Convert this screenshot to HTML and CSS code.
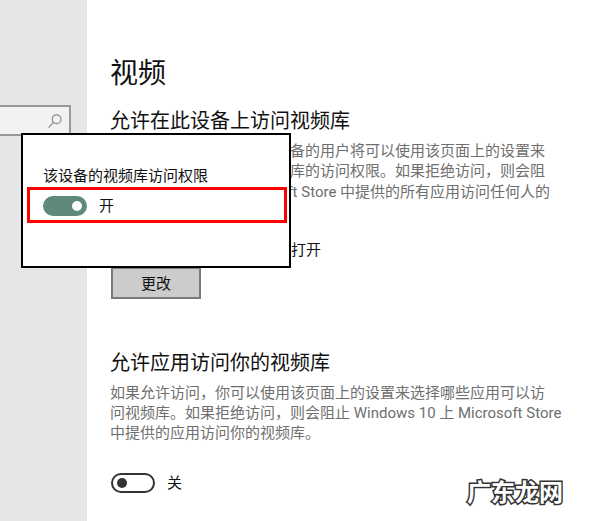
FILE: index.html
```html
<!DOCTYPE html>
<html lang="zh-CN">
<head>
    <meta charset="UTF-8">
    <title>视频</title>
    <link rel="stylesheet" href="styles.css">
</head>
<body>
    <div class="page">
        <div class="sidebar">
            <div class="search">
                <svg class="search-icon" width="16" height="16" viewBox="0 0 16 16" fill="none" stroke="#8a8a8a" stroke-width="1.2">
                    <circle cx="9.6" cy="6.2" r="4.4"/>
                    <path d="M6.4 9.4L1.6 14.6"/>
                </svg>
            </div>
        </div>

        <div class="main">
            <h1 class="title">视频</h1>

            <h2 class="heading">允许在此设备上访问视频库</h2>
            <p class="desc">如果允许访问，则使用此设备的用户将可以使用该页面上的设置来<br>选择是否允许应用访问视频库的访问权限。如果拒绝访问，则会阻<br>止 Windows 10 上 Microsoft Store 中提供的所有应用访问任何人的<br>视频库。</p>
            <p class="state-line">此设备的视频库访问权限已打开</p>
            <button class="change">更改</button>

            <h2 class="heading heading-second">允许应用访问你的视频库</h2>
            <p class="desc">如果允许访问，你可以使用该页面上的设置来选择哪些应用可以访<br>问视频库。如果拒绝访问，则会阻止 Windows 10 上 Microsoft Store<br>中提供的应用访问你的视频库。</p>
            <div class="toggle-row toggle-row-off">
                <span class="toggle toggle-off"><span class="knob"></span></span>
                <span class="toggle-text">关</span>
            </div>
        </div>

        <!-- 弹出框 -->
        <div class="popup">
            <div class="popup-label">该设备的视频库访问权限</div>
            <div class="highlight">
                <div class="toggle-row">
                    <span class="toggle toggle-on"><span class="knob"></span></span>
                    <span class="toggle-text">开</span>
                </div>
            </div>
        </div>

        <div class="watermark">广东龙网</div>
    </div>
</body>
</html>
```

FILE: styles.css
```css
body, html {
    margin: 0;
    padding: 0;
    height: 100%;
}

body {
    background: #fff;
    font-family: Roboto, "Noto Sans CJK SC", sans-serif;
    color: #111;
    overflow: hidden;
}

.page {
    position: relative;
    display: flex;
    width: 600px;
    height: 521px;
    overflow: hidden;
}

/* 左侧栏 */
.sidebar {
    width: 87px;
    flex-shrink: 0;
    padding-top: 105px;
    background: #e6e6e6;
    box-sizing: border-box;
}

.search {
    display: flex;
    align-items: center;
    justify-content: flex-end;
    width: 71px;
    height: 31px;
    padding-right: 6px;
    box-sizing: border-box;
    background: #f2f2f2;
    border: 2px solid #999;
    border-left: none;
}

/* 主区域 */
.main {
    flex: 1;
    padding-left: 24px;
}

.title {
    margin: 53px 0 0 -1px;
    font-size: 28px;
    line-height: 42px;
    font-weight: 400;
}

.heading {
    margin: 11px 0 0 -1px;
    font-size: 20px;
    line-height: 30px;
    font-weight: 400;
}

.heading-second {
    margin-top: 49px;
}

.desc {
    margin: 5px 0 0 -1px;
    font-size: 15px;
    line-height: 20.4px;
    color: #6f6f6f;
    white-space: nowrap;
}

.state-line {
    margin: 16px 0 0;
    font-size: 15px;
    line-height: 22px;
}

.change {
    display: block;
    width: 90px;
    height: 32px;
    margin-top: 6px;
    padding: 0;
    font: inherit;
    font-size: 15px;
    color: #111;
    background: #ccc;
    border: 2px solid #7a7a7a;
}

/* 开关 */
.toggle-row {
    display: flex;
    align-items: center;
    gap: 12px;
}

.toggle-row-off {
    margin-top: 29px;
}

.toggle {
    display: flex;
    align-items: center;
    width: 44px;
    height: 20px;
    box-sizing: border-box;
    border-radius: 10px;
}

.toggle-on {
    justify-content: flex-end;
    padding-right: 5px;
    background: #5f8a7a;
}

.toggle-on .knob {
    background: #fff;
}

.toggle-off {
    padding-left: 5px;
    border: 2px solid #333;
}

.toggle-off .knob {
    margin-left: -1px;
    background: #333;
}

.knob {
    width: 10px;
    height: 10px;
    border-radius: 50%;
}

.toggle-text {
    font-size: 15px;
    line-height: 20px;
}

/* 覆盖在页面上的弹出框 */
.popup {
    position: absolute;
    top: 133px;
    left: 21px;
    width: 270px;
    height: 135px;
    box-sizing: border-box;
    padding: 31px 4px 0;
    background: #fff;
    border: 2px solid #000;
}

.popup-label {
    padding-left: 16px;
    font-size: 15px;
    line-height: 21px;
}

.highlight {
    width: 260px;
    height: 36px;
    padding: 2px 0 0 13px;
    box-sizing: border-box;
    display: flex;
    align-items: center;
    border: 3px solid #f00;
}

.watermark {
    position: absolute;
    left: 467px;
    top: 477px;
    font-size: 24px;
    line-height: 32px;
    font-weight: 700;
    color: #fff;
    -webkit-text-stroke: 3px #333;
    paint-order: stroke fill;
}
```
